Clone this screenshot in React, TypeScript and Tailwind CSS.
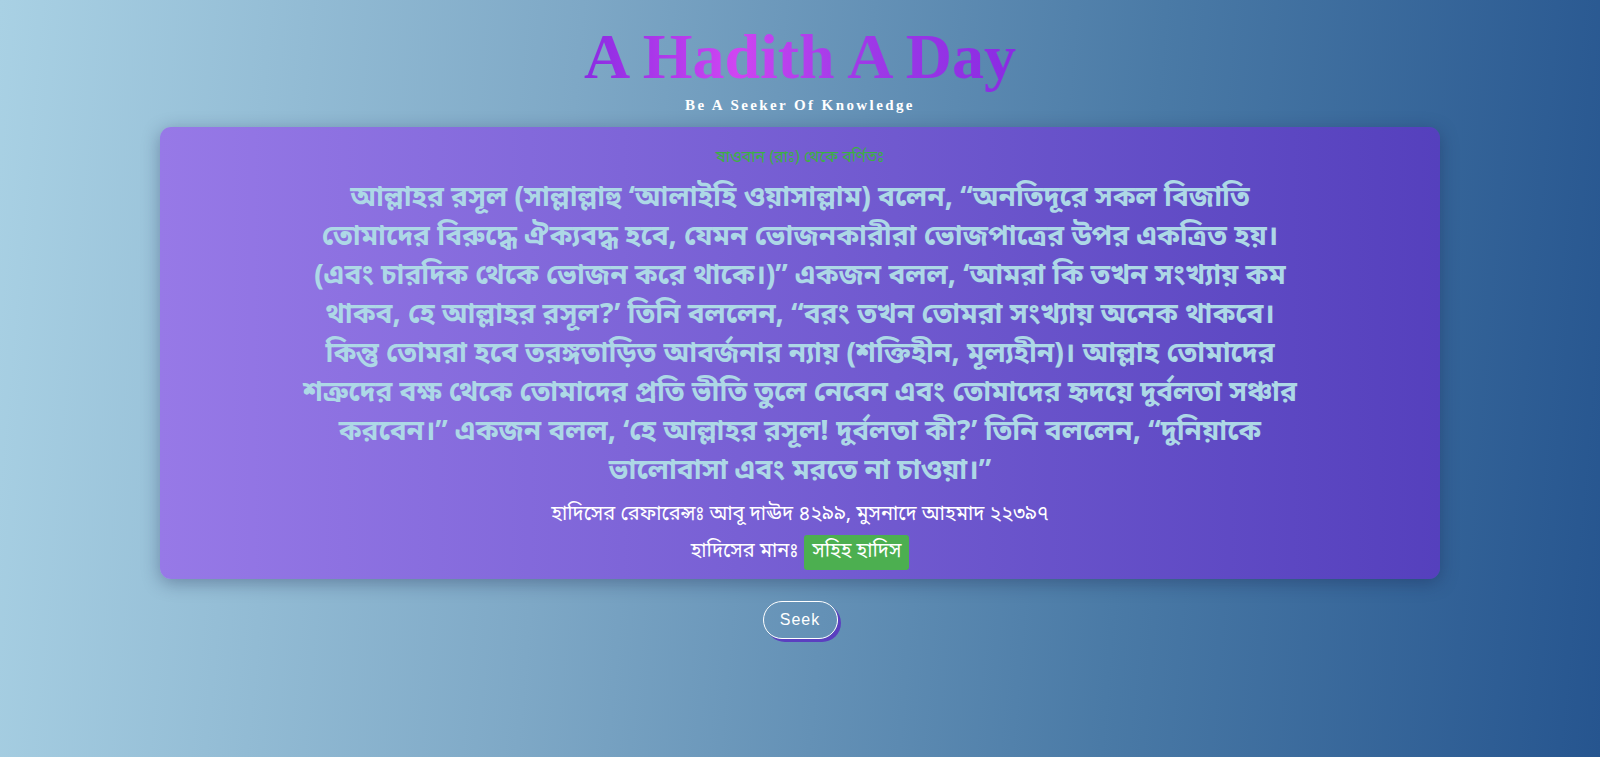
import React from "react"

const hadith = {
  narrator: "ষাওবান (রাঃ) থেকে বর্ণিতঃ",
  text: "আল্লাহর রসূল (সাল্লাল্লাহু ‘আলাইহি ওয়াসাল্লাম) বলেন, “অনতিদূরে সকল বিজাতি তোমাদের বিরুদ্ধে ঐক্যবদ্ধ হবে, যেমন ভোজনকারীরা ভোজপাত্রের উপর একত্রিত হয়। (এবং চারদিক থেকে ভোজন করে থাকে।)” একজন বলল, ‘আমরা কি তখন সংখ্যায় কম থাকব, হে আল্লাহর রসূল?’ তিনি বললেন, “বরং তখন তোমরা সংখ্যায় অনেক থাকবে। কিন্তু তোমরা হবে তরঙ্গতাড়িত আবর্জনার ন্যায় (শক্তিহীন, মূল্যহীন)। আল্লাহ তোমাদের শত্রুদের বক্ষ থেকে তোমাদের প্রতি ভীতি তুলে নেবেন এবং তোমাদের হৃদয়ে দুর্বলতা সঞ্চার করবেন।” একজন বলল, ‘হে আল্লাহর রসূল! দুর্বলতা কী?’ তিনি বললেন, “দুনিয়াকে ভালোবাসা এবং মরতে না চাওয়া।”",
  reference: "আবূ দাঊদ ৪২৯৯, মুসনাদে আহমাদ ২২৩৯৭",
  grade: "সহিহ হাদিস",
}

export default function App() {
  return (
    <div className="min-h-screen w-full flex flex-col items-center bg-[linear-gradient(95deg,#a9d1e4_0%,#7ea8c6_35%,#4a7aa6_70%,#26558f_100%)]">
      <h1 className="mt-5 text-[64px] leading-[normal] font-bold font-['Liberation_Serif',serif] bg-[linear-gradient(90deg,#8a2be2_0%,#cf45f2_35%,#a23be8_60%,#8a2be2_100%)] bg-clip-text text-transparent">
        A Hadith A Day
      </h1>
      <div className="text-[15px] font-bold tracking-[2.4px] text-white font-['Liberation_Serif',serif]">
        Be A Seeker Of Knowledge
      </div>

      {/* hadith card */}
      <div className="mt-[10px] w-[1280px] rounded-[11px] bg-gradient-to-r from-[#9779e7] to-[#5540bd] shadow-[0_4px_18px_rgba(20,30,70,0.35)] px-10 pt-[18px] pb-[9px] flex flex-col items-center text-center font-['Noto_Sans_Bengali',sans-serif]">
        <div className="text-[16px] leading-[26px] text-[#3cb043]">{hadith.narrator}</div>
        <p className="mt-[8px] max-w-[1000px] text-[28px] leading-[39px] font-bold text-[#add8e6]">
          {hadith.text}
        </p>
        <div className="mt-[9px] text-[20px] leading-[30px] text-white">হাদিসের রেফারেন্সঃ {hadith.reference}</div>
        <div className="mt-[5px] flex items-center gap-[6px] text-[20px] text-white">
          <span>হাদিসের মানঃ</span>
          <span className="bg-[#4caf50] rounded-[3px] px-[8px] h-[35px] flex items-center">{hadith.grade}</span>
        </div>
      </div>

      <button className="mt-[22px] w-[75px] h-[38px] rounded-[20px] border border-white text-white text-[16px] tracking-[1px] font-['Liberation_Sans',sans-serif] shadow-[3px_3px_0_#5b3fc0]">
        Seek
      </button>
    </div>
  )
}
